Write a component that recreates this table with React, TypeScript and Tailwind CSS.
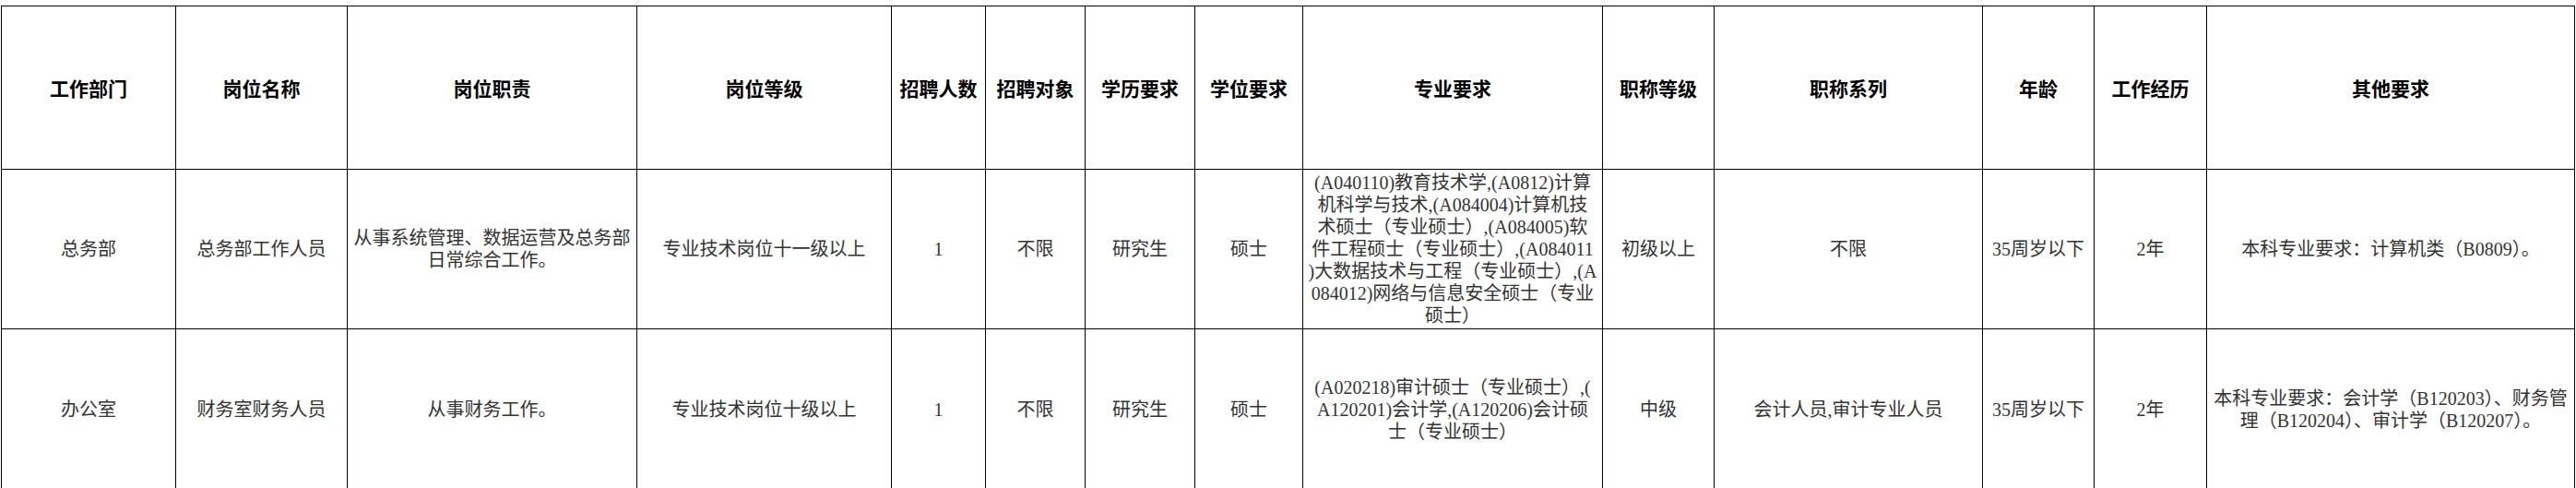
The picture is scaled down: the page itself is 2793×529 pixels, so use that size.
import React from "react";

const headers = [
  "工作部门",
  "岗位名称",
  "岗位职责",
  "岗位等级",
  "招聘人数",
  "招聘对象",
  "学历要求",
  "学位要求",
  "专业要求",
  "职称等级",
  "职称系列",
  "年龄",
  "工作经历",
  "其他要求",
];

const rows: string[][][] = [
  [
    ["总务部"],
    ["总务部工作人员"],
    ["从事系统管理、数据运营及总务部", "日常综合工作。"],
    ["专业技术岗位十一级以上"],
    ["1"],
    ["不限"],
    ["研究生"],
    ["硕士"],
    [
      "(A040110)教育技术学,(A0812)计算",
      "机科学与技术,(A084004)计算机技",
      "术硕士（专业硕士）,(A084005)软",
      "件工程硕士（专业硕士）,(A084011",
      ")大数据技术与工程（专业硕士）,(A",
      "084012)网络与信息安全硕士（专业",
      "硕士）",
    ],
    ["初级以上"],
    ["不限"],
    ["35周岁以下"],
    ["2年"],
    ["本科专业要求：计算机类（B0809）。"],
  ],
  [
    ["办公室"],
    ["财务室财务人员"],
    ["从事财务工作。"],
    ["专业技术岗位十级以上"],
    ["1"],
    ["不限"],
    ["研究生"],
    ["硕士"],
    [
      "(A020218)审计硕士（专业硕士）,(",
      "A120201)会计学,(A120206)会计硕",
      "士（专业硕士）",
    ],
    ["中级"],
    ["会计人员,审计专业人员"],
    ["35周岁以下"],
    ["2年"],
    ["本科专业要求：会计学（B120203）、财务管", "理（B120204）、审计学（B120207）。"],
  ],
];

export default function App() {
  return (
    <div className="w-[2793px] h-[529px] overflow-hidden bg-white">
      <div className="ml-[1px] mt-[6px] grid grid-cols-[189px_186px_314px_276px_102px_108px_119px_117px_325px_121px_291px_121px_122px_399px] grid-rows-[177px_173px_174px] w-[2791px] border-l border-t border-black">
        {headers.map((h, i) => (
          <div
            key={`h${i}`}
            className="flex items-center justify-center border-r border-b border-black text-center text-[21px] font-bold text-black leading-[26px] whitespace-nowrap"
            style={{ fontFamily: '"Noto Sans CJK SC", "Liberation Sans", sans-serif' }}
          >
            {h}
          </div>
        ))}
        {rows.map((r, ri) =>
          r.map((lines, ci) => (
            <div
              key={`r${ri}c${ci}`}
              className="flex flex-col items-center justify-center border-r border-b border-black text-center text-[20px] leading-[24px] text-[#333333] whitespace-nowrap"
              style={{ fontFamily: '"Liberation Serif", "Noto Sans CJK SC", serif' }}
            >
              {lines.map((l, li) => (
                <span key={li} className="block">
                  {l}
                </span>
              ))}
            </div>
          ))
        )}
      </div>
    </div>
  );
}
